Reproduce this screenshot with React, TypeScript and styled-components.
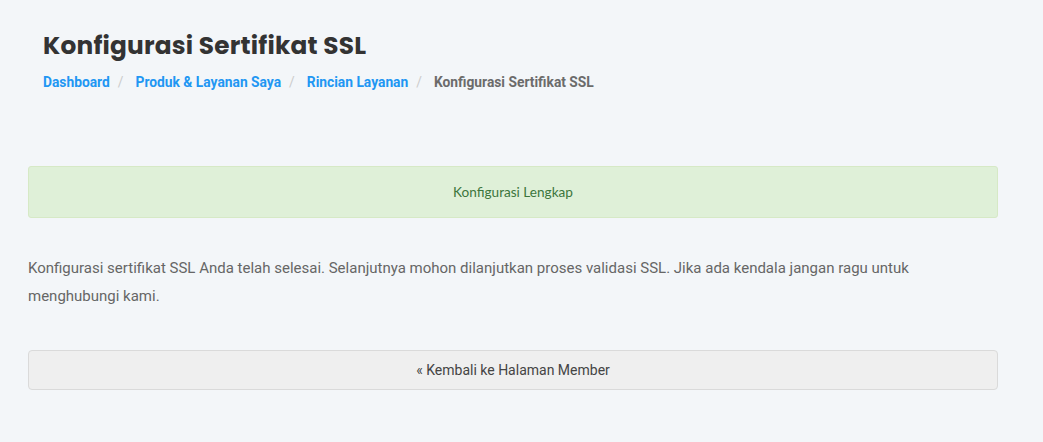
import React from 'react';
import styled, { createGlobalStyle } from 'styled-components';

const GlobalStyle = createGlobalStyle`
  html, body {
    margin: 0;
    padding: 0;
    background: #f3f6f9;
  }
  body {
    font-family: Roboto, "Liberation Sans", Arial, sans-serif;
    color: #555;
  }
  * { box-sizing: border-box; }
`;

const Page = styled.div`
  width: 1043px;
  min-height: 442px;
  padding: 0 45px 0 28px;
`;

const Header = styled.div`
  padding: 30px 15px 0;
`;

const Title = styled.h1`
  margin: 0;
  font-family: Poppins, Inter, "Open Sans", sans-serif;
  font-size: 24.8px;
  font-weight: 700;
  line-height: 32px;
  color: #333;
  letter-spacing: 0.2px;
`;

const Crumbs = styled.ol`
  list-style: none;
  margin: 11px 0 0;
  padding: 0;
  display: flex;
  font-size: 13.8px;
  font-weight: 700;
  line-height: 18px;

  li + li::before {
    content: '/';
    color: #ccc;
    font-weight: 400;
    padding: 0 12px 0 8px;
  }
`;

const Crumb = styled.li<{ $active?: boolean }>`
  color: ${p => (p.$active ? '#6b6b6b' : '#2196f3')};
`;

const Alert = styled.div`
  margin-top: 75px;
  height: 52px;
  display: flex;
  align-items: center;
  justify-content: center;
  background: #dff0d8;
  border: 1px solid #d6e9c6;
  border-radius: 3px;
  color: #3c763d;
  font-family: Lato, "Open Sans", sans-serif;
  font-size: 13.6px;
`;

const Text = styled.p`
  margin: 36px 0 0;
  font-size: 15px;
  line-height: 28px;
  color: #666;
  padding-right: 30px;
`;

const BackButton = styled.button`
  display: block;
  width: 100%;
  margin-top: 40px;
  height: 40px;
  background: #efefef;
  border: 1px solid #dadada;
  border-radius: 4px;
  font-family: Roboto, "Liberation Sans", Arial, sans-serif;
  font-size: 14px;
  color: #444;
  cursor: pointer;
`;

export default function App() {
  return (
    <>
      <GlobalStyle />
      <Page>
        <Header>
          <Title>Konfigurasi Sertifikat SSL</Title>
          <Crumbs>
            <Crumb>Dashboard</Crumb>
            <Crumb>Produk &amp; Layanan Saya</Crumb>
            <Crumb>Rincian Layanan</Crumb>
            <Crumb $active>Konfigurasi Sertifikat SSL</Crumb>
          </Crumbs>
        </Header>
        <Alert>Konfigurasi Lengkap</Alert>
        <Text>
          Konfigurasi sertifikat SSL Anda telah selesai. Selanjutnya mohon dilanjutkan proses validasi SSL. Jika ada kendala jangan ragu untuk menghubungi kami.
        </Text>
        <BackButton>« Kembali ke Halaman Member</BackButton>
      </Page>
    </>
  );
}
